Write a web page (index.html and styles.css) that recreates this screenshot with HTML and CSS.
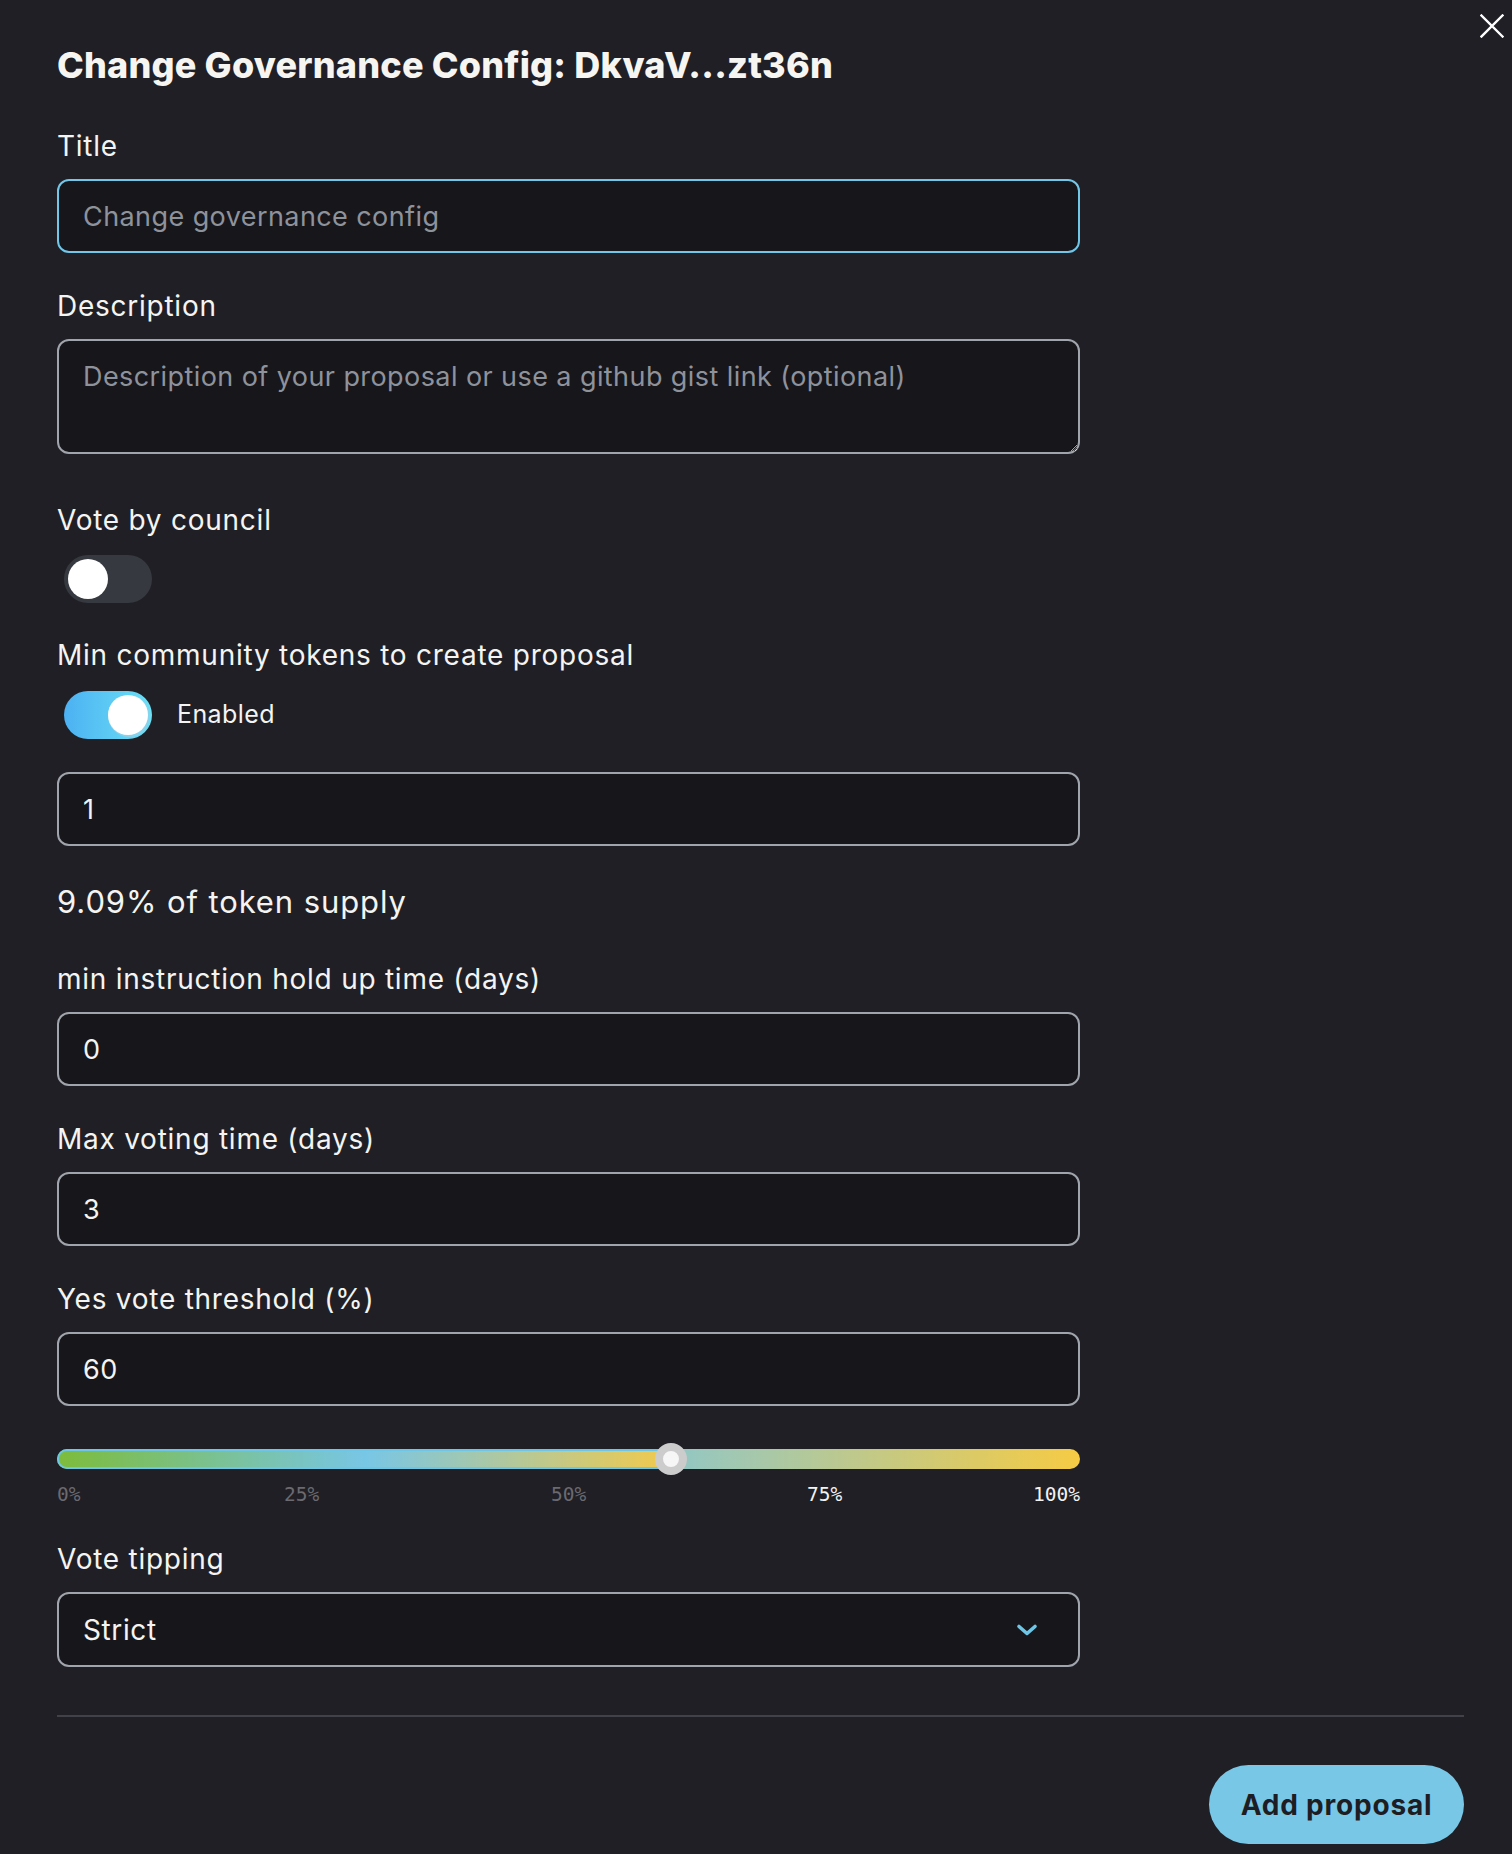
FILE: index.html
```html
<!DOCTYPE html>
<html lang="en">
<head>
<meta charset="utf-8">
<title>Change Governance Config</title>
<link rel="stylesheet" href="styles.css">
</head>
<body>
<div class="modal">
  <button class="close" aria-label="Close">
    <svg width="24" height="24" viewBox="0 0 24 24" fill="none" stroke="#ffffff" stroke-width="2.4" stroke-linecap="square"><path d="M1.5 1.5 L22.5 22.5 M22.5 1.5 L1.5 22.5"/></svg>
  </button>
  <h1 class="heading">Change Governance Config: DkvaV...zt36n</h1>

  <div class="form">
    <label class="label label--first">Title</label>
    <input class="input input--focus" type="text" placeholder="Change governance config">

    <label class="label">Description</label>
    <textarea class="input textarea" placeholder="Description of your proposal or use a github gist link (optional)"></textarea>

    <label class="label label--council">Vote by council</label>
    <div class="toggle-row toggle-row--council">
      <span class="toggle"><span class="knob"></span></span>
    </div>

    <label class="label label--min">Min community tokens to create proposal</label>
    <div class="toggle-row toggle-row--min">
      <span class="toggle toggle--on"><span class="knob"></span></span>
      <span class="toggle-text">Enabled</span>
    </div>
    <input class="input input--after-toggle" type="text" value="1">

    <div class="supply">9.09% of token supply</div>

    <label class="label label--after-supply">min instruction hold up time (days)</label>
    <input class="input" type="text" value="0">

    <label class="label">Max voting time (days)</label>
    <input class="input" type="text" value="3">

    <label class="label">Yes vote threshold (%)</label>
    <input class="input" type="text" value="60">

    <div class="slider">
      <div class="track">
        <div class="fill" style="width: 60%"></div>
        <span class="thumb" style="left: 60%"></span>
      </div>
      <div class="ticks">
        <span class="tick tick--0">0%</span>
        <span class="tick tick--25">25%</span>
        <span class="tick tick--50">50%</span>
        <span class="tick tick--75 tick--active">75%</span>
        <span class="tick tick--100 tick--active">100%</span>
      </div>
    </div>

    <label class="label label--tipping">Vote tipping</label>
    <div class="select">
      <span class="select-value">Strict</span>
      <svg class="chevron" width="22" height="14" viewBox="0 0 22 14" fill="none" stroke="#6ec6e6" stroke-width="3.6" stroke-linecap="round" stroke-linejoin="round"><path d="M3 3.5 L11 10.5 L19 3.5"/></svg>
    </div>
  </div>

  <div class="footer">
    <div class="divider"></div>
    <div class="actions">
      <button class="btn">Add proposal</button>
    </div>
  </div>
</div>
</body>
</html>
```

FILE: styles.css
```css
* { box-sizing: border-box; }

html, body {
  margin: 0;
  padding: 0;
  background: #201f25;
}

body {
  font-family: Inter, "Noto Sans", "Liberation Sans", sans-serif;
  color: #f4f4f2;
  min-height: 1854px;
}

.modal {
  position: relative;
  padding: 43px 48px 10px 57px;
}

.close {
  position: absolute;
  top: 14px;
  right: 8px;
  width: 24px;
  height: 24px;
  padding: 0;
  margin: 0;
  border: 0;
  background: none;
  cursor: pointer;
}
.close svg { display: block; }

.heading {
  margin: 0;
  font-size: 36px;
  line-height: 44px;
  font-weight: 800;
  letter-spacing: 0.2px;
  color: #f6f5f2;
}

.form {
  width: 1023px;
  display: flex;
  flex-direction: column;
  align-items: flex-start;
}

.label {
  display: block;
  font-size: 28px;
  line-height: 34px;
  font-weight: 400;
  letter-spacing: 0.75px;
  color: #f4f4f2;
  margin-top: 36px;
  margin-bottom: 16px;
}
.label--first { margin-top: 42px; }
.label--council { margin-top: 49px; margin-bottom: 18px; }
.label--min { margin-top: 35px; margin-bottom: 19px; }
.label--after-supply { margin-top: 41px; }
.label--tipping { margin-top: 36px; }

.input {
  display: block;
  width: 100%;
  height: 74px;
  margin: 0;
  padding: 0 24px;
  border: 2px solid #a0a4ac;
  border-radius: 12px;
  background: #17161b;
  color: #f4f4f2;
  font-family: Inter, "Noto Sans", "Liberation Sans", sans-serif;
  font-size: 27px;
  letter-spacing: 0.42px;
  outline: none;
}
.input::placeholder { color: #8e929b; opacity: 1; }
.input--focus { border-color: #72c6e8; }

.textarea {
  height: 115px;
  padding: 16px 24px;
  line-height: 40px;
  resize: vertical;
}

.toggle-row {
  display: flex;
  align-items: center;
  gap: 25px;
  padding-left: 7px;
  height: 48px;
}

.toggle {
  position: relative;
  display: block;
  width: 88px;
  height: 48px;
  border-radius: 24px;
  background: #363a40;
}
.toggle .knob {
  position: absolute;
  top: 4px;
  left: 4px;
  width: 40px;
  height: 40px;
  border-radius: 50%;
  background: #ffffff;
}
.toggle--on {
  background: linear-gradient(90deg, #4cb1f2 0%, #6be1f6 100%);
}
.toggle--on .knob {
  left: 44px;
  box-shadow: 1px 1px 0 1px rgba(140, 210, 235, 0.9);
}

.toggle-text {
  font-size: 25px;
  letter-spacing: 0.4px;
  color: #f4f4f2;
  margin-top: -3px;
}

.input--after-toggle { margin-top: 33px; }

.supply {
  margin-top: 37px;
  font-size: 31px;
  line-height: 38px;
  letter-spacing: 0.9px;
  color: #f4f4f2;
}

.slider {
  width: 100%;
  margin-top: 43px;
}

.track {
  position: relative;
  width: 100%;
  height: 20px;
  border-radius: 10px;
  background: linear-gradient(90deg, #7dbc3c 0%, #78c6e6 50%, #f6cb44 100%);
}

.fill {
  height: 100%;
  border: 2px solid #6ec6e6;
  border-right: 0;
  border-radius: 10px 0 0 10px;
  background: linear-gradient(90deg, #7dbc3c 0%, #78c6e6 50%, #f2ca4b 100%);
}

.thumb {
  position: absolute;
  top: 50%;
  width: 32px;
  height: 32px;
  border-radius: 50%;
  border: 8px solid #cccccc;
  background: #f6f6f6;
  transform: translate(-50%, -50%);
}

.ticks {
  position: relative;
  height: 23px;
  margin-top: 14px;
  font-family: "DejaVu Sans Mono", "Liberation Mono", monospace;
  font-size: 19.5px;
  line-height: 23px;
  color: #6a6a70;
}
.tick { position: absolute; top: 0; }
.tick--0 { left: 0; }
.tick--25 { left: 227px; }
.tick--50 { left: 494px; }
.tick--75 { left: 750px; }
.tick--100 { right: 0; }
.tick--active { color: #f2f2f2; }

.select {
  width: 100%;
  height: 75px;
  display: flex;
  align-items: center;
  justify-content: space-between;
  padding: 0 40px 0 24px;
  border: 2px solid #a0a4ac;
  border-radius: 12px;
  background: #17161b;
}
.select-value {
  font-size: 28px;
  letter-spacing: 0.6px;
  color: #f4f4f2;
}
.chevron { display: block; }

.footer {
  margin-top: 48px;
}
.divider {
  height: 2px;
  background: #414149;
}
.actions {
  display: flex;
  justify-content: flex-end;
  margin-top: 48px;
}
.btn {
  width: 255px;
  height: 79px;
  border: 0;
  border-radius: 40px;
  background: #79c7e6;
  color: #1e1d23;
  font-family: Inter, "Noto Sans", "Liberation Sans", sans-serif;
  font-size: 28px;
  font-weight: 700;
  letter-spacing: 0.8px;
  cursor: pointer;
}
```
